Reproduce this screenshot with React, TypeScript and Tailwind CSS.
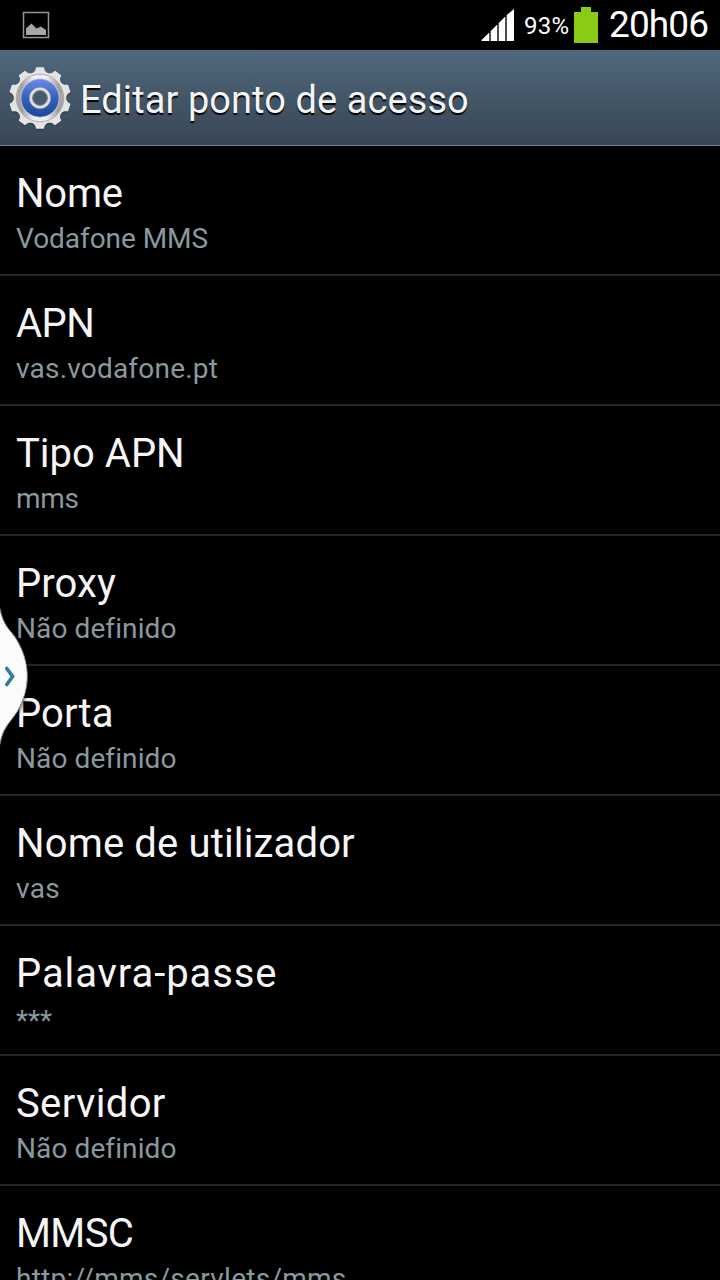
import { ReactNode } from "react";
import clsx from "clsx";

const settings = [
  { title: "Nome", summary: "Vodafone MMS", titleClass: "tracking-[-0.2px]", summaryClass: "tracking-[-0.05px]" },
  { title: "APN", summary: "vas.vodafone.pt", titleClass: "tracking-[-0.6px]", summaryClass: "tracking-[0.2px]" },
  { title: "Tipo APN", summary: "mms", titleClass: "tracking-[0px]", summaryClass: "tracking-[-0.3px]" },
  { title: "Proxy", summary: "Não definido", titleClass: "tracking-[0.1px]", summaryClass: "tracking-[0.1px]" },
  { title: "Porta", summary: "Não definido", titleClass: "tracking-[0.1px]", summaryClass: "tracking-[0.1px]" },
  { title: "Nome de utilizador", summary: "vas", titleClass: "tracking-[0.15px]", summaryClass: "tracking-[0.3px]" },
  { title: "Palavra-passe", summary: "***", titleClass: "tracking-[0.9px]", summaryClass: "translate-y-[2px]" },
  { title: "Servidor", summary: "Não definido", titleClass: "tracking-[0.35px]", summaryClass: "tracking-[0.1px]" },
  { title: "MMSC", summary: "http://mms/servlets/mms", titleClass: "tracking-[-0.6px]", summaryClass: "tracking-[0.27px]" },
];

const teeth = [0, 36, 72, 108, 144, 180, 216, 252, 288, 324];

function PictureIcon() {
  return (
    <svg width="28" height="28" viewBox="0 0 28 28">
      <rect x="1.5" y="1.5" width="25" height="25" fill="none" stroke="#949494" strokeWidth="1.5" />
      <path d="M4 24V17.5L9.5 12.5L14.5 17.5L19 15.5L24 19V24Z" fill="#a6a6a6" />
    </svg>
  );
}

function SignalIcon() {
  return (
    <svg width="34" height="33" viewBox="0 0 34 33" fill="#fff">
      <path d="M0.5 32V31L8.3 23.5V32Z" />
      <path d="M9.7 32V22L16.3 15.5V32Z" />
      <path d="M17.7 32V14L24.3 7.5V32Z" />
      <path d="M25.7 32V6L33 0V32Z" />
    </svg>
  );
}

function BatteryIcon() {
  return (
    <svg width="24" height="36" viewBox="0 0 24 36">
      <path d="M0 5H7V0H17V5H24V36H0Z" fill="#8bcb14" />
    </svg>
  );
}

function GearIcon() {
  return (
    <svg width="64" height="64" viewBox="-32 -32 64 64">
      <defs>
        <linearGradient id="metal" x1="0" y1="0" x2="1" y2="0">
          <stop offset="0" stopColor="#a8a8a8" />
          <stop offset="0.12" stopColor="#a0a0a0" />
          <stop offset="0.35" stopColor="#eeeeee" />
          <stop offset="0.65" stopColor="#eeeeee" />
          <stop offset="0.88" stopColor="#a0a0a0" />
          <stop offset="1" stopColor="#a8a8a8" />
        </linearGradient>
        <linearGradient id="blue" x1="0" y1="0" x2="0" y2="1">
          <stop offset="0" stopColor="#6c8cea" />
          <stop offset="0.5" stopColor="#3460bd" />
          <stop offset="1" stopColor="#1c479a" />
        </linearGradient>
      </defs>
      <g fill="#26343f" opacity="0.5" transform="translate(0 1)">
        <circle r="26.5" />
        {teeth.map((angle) => (
          <path key={angle} d="M-7 -25L-4 -31H4L7 -25Z" transform={`rotate(${angle})`} />
        ))}
      </g>
      <g fill="#e4e4e4">
        <circle r="26.3" />
        {teeth.map((angle) => (
          <path key={angle} d="M-7.5 -24.5L-5 -27.2L-3.8 -30.8H3.8L5 -27.2L7.5 -24.5Z" transform={`rotate(${angle})`} />
        ))}
      </g>
      <circle r="23.8" fill="url(#metal)" stroke="#a8a8a8" strokeWidth="0.9" />
      <circle r="19.2" fill="url(#blue)" stroke="#d4d4d4" strokeWidth="0.8" />
      <circle r="9" fill="#465b6d" stroke="#dedede" strokeWidth="3.4" />
      <circle r="7.4" fill="none" stroke="#777b7d" strokeWidth="1" />
      <circle r="11" fill="none" stroke="#75849f" strokeWidth="0.7" />
    </svg>
  );
}

function StatusBar() {
  return (
    <div className="flex h-[50px] shrink-0 items-start bg-black pl-[22px] pr-3">
      <div className="pt-[11px]">
        <PictureIcon />
      </div>
      <div className="ml-auto flex items-start">
        <div className="pt-[9px]">
          <SignalIcon />
        </div>
        <span className="ml-[9px] mt-[11px] w-[50px] whitespace-nowrap text-[24px] leading-[30px] tracking-[0.2px]">
          93%
        </span>
        <div className="pt-[7px]">
          <BatteryIcon />
        </div>
        <span className="ml-[11px] w-[99px] whitespace-nowrap text-[37px] leading-[50px] tracking-[-0.9px]">20h06</span>
      </div>
    </div>
  );
}

function Header({ children }: { children: ReactNode }) {
  return (
    <header className="flex h-24 shrink-0 items-center border-b border-[#6e8797] bg-linear-to-b from-[#50687c] to-[#374654] pl-2">
      <GearIcon />
      <h1 className="ml-2 pt-[5px] text-[38px] leading-[48px] tracking-[0.08px] text-[#f5f5f5] [text-shadow:0_2px_1px_#000]">
        {children}
      </h1>
    </header>
  );
}

function SettingRow({ title, summary, titleClass, summaryClass }: (typeof settings)[number]) {
  return (
    <li className="h-[130px] shrink-0 border-b-2 border-[#262626] px-4 pt-6">
      <div className={clsx("text-[40px] leading-[48px] text-[#f5f5f5]", titleClass)}>{title}</div>
      <div className={clsx("mt-1 text-[28px] leading-[34px] text-[#8a989f]", summaryClass)}>{summary}</div>
    </li>
  );
}

export default function App() {
  return (
    <div className="relative flex h-[1280px] w-[720px] flex-col overflow-hidden bg-black font-['Roboto',sans-serif] text-white">
      <StatusBar />
      <Header>Editar ponto de acesso</Header>
      <ul className="flex flex-col">
        {settings.map((item) => (
          <SettingRow key={item.title} {...item} />
        ))}
      </ul>

      {/* Edge panel handle */}
      <svg
        className="absolute left-0 top-[606px] drop-shadow-[0_0_2px_#000]"
        width="34"
        height="142"
        viewBox="0 0 34 142"
      >
        <path
          d="M-3 -4L0 3C3 18 8 22 15 31C31 56 31 82 17 106C8 119 3 122 0 138L-3 144Z"
          fill="#fafcfc"
          stroke="#8b8b8b"
          strokeWidth="1"
        />
        <path d="M6.8 62.5L12.6 70.5L6.8 78.5" fill="none" stroke="#327b9b" strokeWidth="3.6" strokeLinecap="round" />
      </svg>
    </div>
  );
}
